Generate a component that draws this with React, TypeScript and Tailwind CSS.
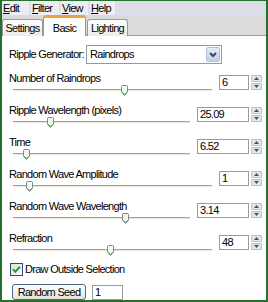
import { clsx } from 'clsx'

const rows = [
  { label: 'Number of Raindrops', value: '6', wide: false, thumb: 'left-[108px]' },
  { label: 'Ripple Wavelength (pixels)', value: '25.09', wide: true, thumb: 'left-[34px]' },
  { label: 'Time', value: '6.52', wide: true, thumb: 'left-[10px]' },
  { label: 'Random Wave Amplitude', value: '1', wide: false, thumb: 'left-[13px]' },
  { label: 'Random Wave Wavelength', value: '3.14', wide: true, thumb: 'left-[109px]' },
  { label: 'Refraction', value: '48', wide: false, thumb: 'left-[94px]' },
]

function Thumb({ className }: { className: string }) {
  return (
    <svg width="7" height="11" viewBox="0 0 7 11" className={className}>
      <path
        d="M0.5 1.5 Q0.5 0.5 1.5 0.5 H5.5 Q6.5 0.5 6.5 1.5 V7 L3.5 10.5 L0.5 7 Z"
        fill="#f6f6f3"
        stroke="#7d8a90"
      />
      <path d="M1.5 7.4 L3.5 9.6 L5.5 7.4" fill="none" stroke="#3ea83e" />
    </svg>
  )
}

function SpinButtons() {
  return (
    <div className="flex h-[15px] w-[11px] flex-col gap-px">
      <div className="flex flex-1 items-center justify-center rounded-[1px] border border-[#b3bfd6] bg-[#e2e8f3]">
        <svg width="5" height="3" viewBox="0 0 5 3">
          <path d="M0 3 L2.5 0 L5 3 Z" fill="#3c4d6e" />
        </svg>
      </div>
      <div className="flex flex-1 items-center justify-center rounded-[1px] border border-[#b3bfd6] bg-[#e2e8f3]">
        <svg width="5" height="3" viewBox="0 0 5 3">
          <path d="M0 0 L2.5 3 L5 0 Z" fill="#3c4d6e" />
        </svg>
      </div>
    </div>
  )
}

function SpinBox({ value, wide }: { value: string; wide: boolean }) {
  return (
    <div className="mt-[3px] flex items-start gap-[2px]">
      <div
        className={clsx(
          'h-[15px] border border-[#9a9a9a] bg-white pl-[2px] leading-[13px]',
          wide ? 'w-[52px]' : 'w-[30px]',
        )}
      >
        {value}
      </div>
      <SpinButtons />
    </div>
  )
}

function MenuItem({ first, rest, className }: { first: string; rest: string; className: string }) {
  return (
    <div className={clsx('h-[14px] bg-[#ededf2] pl-[1px] leading-[14px]', className)}>
      <span className="underline underline-offset-1">{first}</span>
      {rest}
    </div>
  )
}

export default function App() {
  return (
    <div className="flex h-[302px] w-[268px] flex-col overflow-hidden border-x-2 border-t border-b-2 border-[#23702f] bg-white font-['Liberation_Sans',Arial,sans-serif] text-[11px] tracking-[-0.7px] text-black">
      {/* menu bar */}
      <div className="flex h-[14px] gap-[2px] bg-[#dcdde7]">
        <MenuItem first="E" rest="dit" className="w-[27px]" />
        <MenuItem first="F" rest="ilter" className="w-[28px]" />
        <MenuItem first="V" rest="iew" className="w-[27px]" />
        <MenuItem first="H" rest="elp" className="w-[25px]" />
      </div>
      <div className="h-[3px] bg-[#f4f4f6]" />

      {/* tabs */}
      <div className="flex h-[21px] shrink-0 items-end border-b border-[#919b9c] bg-[#dcdbdb]">
        <div className="mb-[-1px] flex h-[17px] w-[41px] items-center justify-center rounded-t-[3px] border border-b-0 border-[#919b9c] bg-gradient-to-b from-white to-[#ecebe6] pt-[1px]">
          Settings
        </div>
        <div className="relative z-10 mb-[-1px] flex h-[21px] w-[43px] items-start justify-center rounded-t-[3px] border-x border-t-[3px] border-[#919b9c] border-t-[#eea23e] bg-white pt-[2px]">
          Basic
        </div>
        <div className="mb-[-1px] ml-[1px] flex h-[17px] w-[41px] items-center justify-center rounded-t-[3px] border border-b-0 border-[#919b9c] bg-gradient-to-b from-white to-[#ecebe6] pt-[1px]">
          Lighting
        </div>
      </div>

      {/* content */}
      <div className="flex flex-1 flex-col pl-[7px] pr-[4px]">
        <div className="mt-[9px] flex items-center">
          <div className="w-[77px] shrink-0 whitespace-nowrap">Ripple Generator:</div>
          <div className="flex h-[19px] w-[136px] items-center border border-[#7f9db9] bg-white">
            <div className="flex-1 pl-[3px]">Raindrops</div>
            <div className="mr-[1px] flex h-[15px] w-[14px] items-center justify-center rounded-[2px] border border-[#b3c0da] bg-gradient-to-b from-[#e6ecf8] to-[#c3cfe6]">
              <svg width="8" height="6" viewBox="0 0 8 6">
                <path d="M1 1 L4 4 L7 1" fill="none" stroke="#34456a" strokeWidth="2" />
              </svg>
            </div>
          </div>
        </div>

        <div className="mt-[8px] flex flex-col">
          {rows.map((row) => (
            <div key={row.label} className="flex h-[32px] items-start">
              <div className="flex flex-1 flex-col">
                <div className="h-[13px] whitespace-nowrap leading-[13px]">{row.label}</div>
                <div className="relative ml-[4px] mr-[7px] h-[11px]">
                  <div className="absolute left-0 right-0 top-[4px] h-[2px] border-t border-[#a2a2a2] bg-[#e9e7dc]" />
                  <Thumb className={clsx('absolute top-0', row.thumb)} />
                </div>
              </div>
              <SpinBox value={row.value} wide={row.wide} />
            </div>
          ))}
        </div>

        <div className="-mt-px ml-[1px] flex h-[13px] items-center gap-[2px]">
          <svg width="13" height="13" viewBox="0 0 13 13">
            <defs>
              <linearGradient id="cb" x1="0" y1="0" x2="1" y2="1">
                <stop offset="0" stopColor="#dcdcd7" />
                <stop offset="1" stopColor="#ffffff" />
              </linearGradient>
            </defs>
            <rect x="0.5" y="0.5" width="12" height="12" fill="url(#cb)" stroke="#1c5180" />
            <path d="M3 6.3 L5.3 8.7 L10 3.8" fill="none" stroke="#21a121" strokeWidth="2" />
          </svg>
          <span>Draw Outside Selection</span>
        </div>

        <div className="mt-[8px] flex items-start gap-[6px]">
          <div className="ml-[3px] flex h-[16px] w-[74px] items-center justify-center rounded-[3px] border border-[#4a6a8f] bg-gradient-to-b from-white to-[#e4e2d8]">
            Random Seed
          </div>
          <div className="mt-[1px] h-[15px] w-[31px] border border-[#9a9a9a] bg-white pl-[2px] leading-[13px]">1</div>
        </div>
      </div>
    </div>
  )
}
